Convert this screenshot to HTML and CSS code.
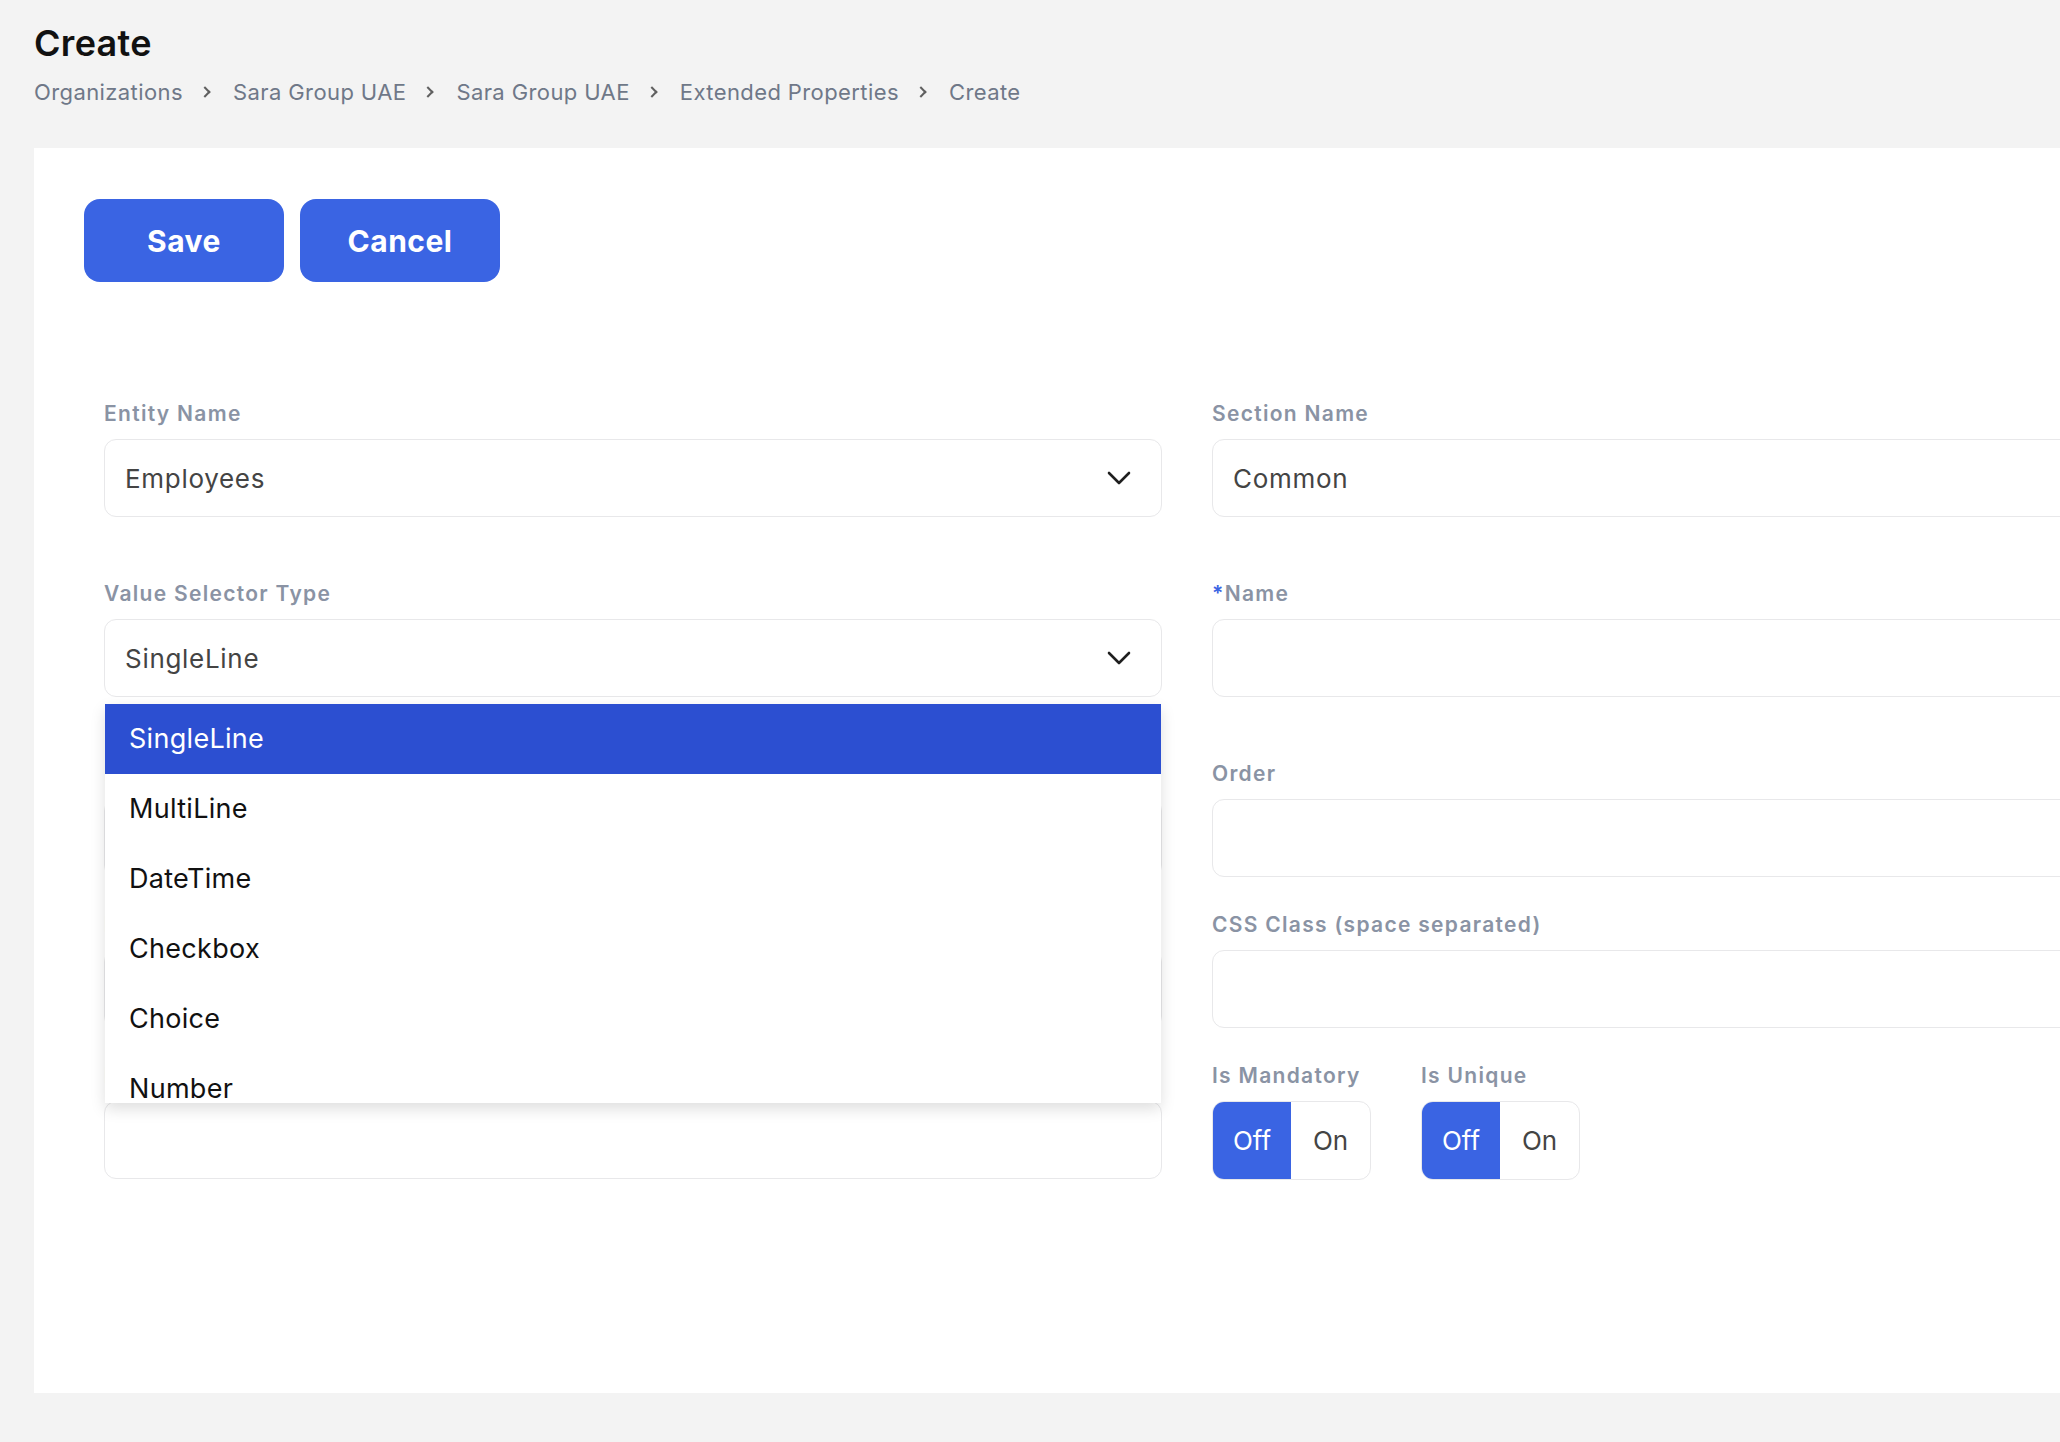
FILE: index.html
```html
<!DOCTYPE html>
<html lang="en">
<head>
  <meta charset="UTF-8" />
  <title>Create - Extended Properties</title>
  <meta name="viewport" content="width=device-width, initial-scale=1.0">
  <link rel="stylesheet" href="styles.css">
</head>
<body>

<header class="page-header">
  <h1>Create</h1>
  <nav class="breadcrumb">
    <a href="#">Organizations</a>
    <span class="crumb-sep"></span>
    <a href="#">Sara Group UAE</a>
    <span class="crumb-sep"></span>
    <a href="#">Sara Group UAE</a>
    <span class="crumb-sep"></span>
    <a href="#">Extended Properties</a>
    <span class="crumb-sep"></span>
    <span>Create</span>
  </nav>
</header>

<main class="panel">
  <div class="actions">
    <button class="btn">Save</button>
    <button class="btn">Cancel</button>
  </div>

  <form class="form">
    <!-- left column -->
    <div class="col">
      <div class="field spaced">
        <label>Entity Name</label>
        <div class="select">
          <span>Employees</span>
          <svg class="caret" width="24" height="14" viewBox="0 0 24 14"><path d="M2 2l10 10L22 2" fill="none" stroke="#1f1f1f" stroke-width="2.6" stroke-linecap="round" stroke-linejoin="round"/></svg>
        </div>
      </div>

      <div class="field spaced has-menu">
        <label>Value Selector Type</label>
        <div class="select">
          <span>SingleLine</span>
          <svg class="caret" width="24" height="14" viewBox="0 0 24 14"><path d="M2 2l10 10L22 2" fill="none" stroke="#1f1f1f" stroke-width="2.6" stroke-linecap="round" stroke-linejoin="round"/></svg>
        </div>
        <ul class="menu">
          <li class="active">SingleLine</li>
          <li>MultiLine</li>
          <li>DateTime</li>
          <li>Checkbox</li>
          <li>Choice</li>
          <li>Number</li>
        </ul>
      </div>

      <div class="field">
        <label>Default Value</label>
        <input type="text">
      </div>

      <div class="field">
        <label>Placeholder</label>
        <input type="text">
      </div>

      <div class="field">
        <label>Help Text</label>
        <input type="text">
      </div>
    </div>

    <!-- right column -->
    <div class="col">
      <div class="field spaced">
        <label>Section Name</label>
        <input type="text" value="Common">
      </div>

      <div class="field spaced">
        <label><span class="req">*</span>Name</label>
        <input type="text">
      </div>

      <div class="field">
        <label>Order</label>
        <input type="text">
      </div>

      <div class="field">
        <label>CSS Class (space separated)</label>
        <input type="text">
      </div>

      <div class="switches">
        <div class="field">
          <label>Is Mandatory</label>
          <div class="switch">
            <span class="on">Off</span>
            <span>On</span>
          </div>
        </div>
        <div class="field">
          <label>Is Unique</label>
          <div class="switch">
            <span class="on">Off</span>
            <span>On</span>
          </div>
        </div>
      </div>
    </div>
  </form>
</main>

</body>
</html>
```

FILE: styles.css
```css
* {
  box-sizing: border-box;
}

html {
  overflow: hidden;
}

body {
  font-family: 'Inter', 'Liberation Sans', sans-serif;
  margin: 0;
  background-color: #f3f3f3;
  color: #111;
}

/* Header */
.page-header {
  padding: 21px 34px 0;
}

.page-header h1 {
  margin: 0;
  font-size: 36px;
  font-weight: 600;
  line-height: 44px;
  letter-spacing: 0.3px;
}

.breadcrumb {
  display: flex;
  align-items: center;
  margin-top: 12px;
  height: 30px;
  font-size: 22px;
  letter-spacing: 0.4px;
  color: #6f7888;
}

.breadcrumb a {
  color: inherit;
  text-decoration: none;
}

.crumb-sep {
  width: 8px;
  height: 8px;
  margin: 0 24px 0 18px;
  border-top: 2.5px solid #5f5f5f;
  border-right: 2.5px solid #5f5f5f;
  transform: rotate(45deg);
}

/* Panel */
.panel {
  background: #fff;
  margin: 41px 0 0 34px;
  width: 2400px;
  height: 1245px;
  padding: 51px 0 0 50px;
}

.actions {
  display: flex;
  gap: 16px;
}

.btn {
  width: 200px;
  height: 83px;
  border: none;
  border-radius: 16px;
  background: #3a64e3;
  color: #fff;
  font-family: inherit;
  font-size: 30px;
  font-weight: 700;
  letter-spacing: 0.5px;
  cursor: pointer;
}

/* Form */
.form {
  display: grid;
  grid-template-columns: 1058px 1058px;
  column-gap: 50px;
  margin-top: 119px;
  padding-left: 20px;
}

.col {
  display: flex;
  flex-direction: column;
}

.field {
  position: relative;
  margin-bottom: 35px;
}

.field.spaced {
  margin-bottom: 64px;
}

.field label {
  display: block;
  font-size: 21px;
  font-weight: 600;
  line-height: 26px;
  letter-spacing: 1.3px;
  color: #8a93a4;
  margin-bottom: 12px;
}

.req {
  color: #3a64e3;
}

input[type="text"], .select {
  display: block;
  width: 100%;
  height: 78px;
  border: 1.5px solid #e8e8ea;
  border-radius: 12px;
  padding: 0 20px;
  font-family: inherit;
  font-size: 26px;
  letter-spacing: 0.7px;
  color: #444;
  background: #fff;
}

.select {
  display: flex;
  align-items: center;
  justify-content: space-between;
  padding-right: 30px;
}

.caret {
  display: block;
}

/* Open select list */
.menu {
  position: absolute;
  z-index: 10;
  top: calc(100% + 7px);
  left: 1px;
  right: 1px;
  margin: 0;
  padding: 0;
  list-style: none;
  max-height: 399px;
  overflow: hidden;
  background: #fff;
  box-shadow: 0 6px 14px rgba(0, 0, 0, 0.13);
}

.menu li {
  height: 70px;
  line-height: 70px;
  padding-left: 24px;
  font-size: 27px;
  letter-spacing: 0.3px;
  color: #111;
}

.menu li.active {
  background: #2c4fd1;
  color: #fff;
}

/* On/Off switches */
.switches {
  display: flex;
  gap: 50px;
}

.switch {
  display: inline-flex;
  height: 79px;
  border: 1.5px solid #e8e8ea;
  border-radius: 12px;
  overflow: hidden;
}

.switch span {
  display: flex;
  align-items: center;
  justify-content: center;
  width: 79px;
  font-size: 26px;
  color: #444;
}

.switch span.on {
  width: 78px;
  background: #3a64e3;
  color: #fff;
}
```
